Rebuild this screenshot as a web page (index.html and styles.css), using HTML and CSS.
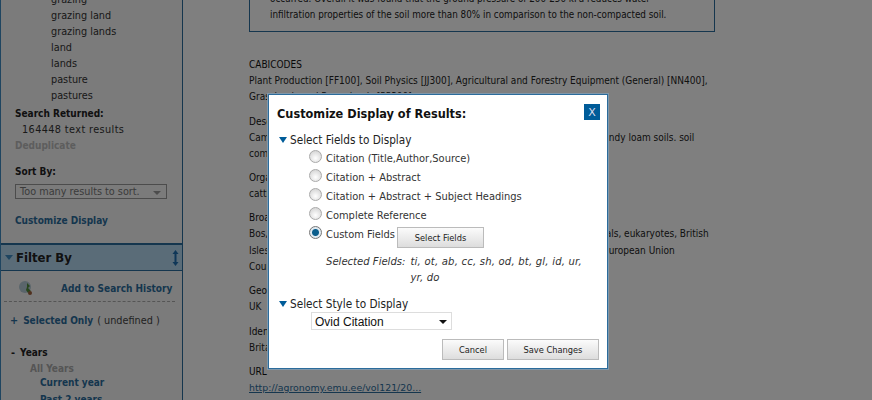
FILE: index.html
```html
<!DOCTYPE html>
<html lang="en">
<head>
<meta charset="utf-8">
<title>Customize Display of Results</title>
<link rel="stylesheet" href="styles.css">
</head>
<body>
<div class="page">
  <aside class="sidebar">
    <div class="search-panel">
      <ul class="terms">
        <li>grazing</li><li>grazing land</li><li>grazing lands</li><li>land</li><li>lands</li><li>pasture</li><li>pastures</li>
      </ul>
      <div class="side-head first">Search Returned:</div>
      <div class="results">164448 text results</div>
      <div class="dedupe">Deduplicate</div>
      <div class="side-head sort">Sort By:</div>
      <div class="fake-select"><span>Too many results to sort.</span><i class="fake-arrow"></i></div>
      <a class="customize">Customize Display</a>
    </div>
    <div class="filter-head">
      <span class="tri"></span><span class="filter-title">Filter By</span>
      <svg class="resize" width="7" height="16" viewBox="0 0 7 16"><path d="M3.5 0 L6.5 4 H4.5 V12 H6.5 L3.5 16 L.5 12 H2.5 V4 H.5 Z" fill="#1f6fb0"/></svg>
    </div>
    <div class="history">
      <svg class="globe" width="16" height="16" viewBox="0 0 16 16"><circle cx="7" cy="7" r="6" fill="#b5cad6"/><path d="M9 3 L12 6 L10 8 L13 11 L10 13 L8 10 L9 7 Z" fill="#4f8a3a"/><circle cx="12" cy="13" r="2" fill="#a0603d"/></svg>
      <a class="history-link">Add to Search History</a>
    </div>
    <div class="selected"><span class="plus">+</span><a class="sel-link">Selected Only</a><span class="undef">( undefined )</span></div>
    <div class="years"><span class="minus">-</span><b>Years</b></div>
    <div class="all-years">All Years</div>
    <a class="year-link">Current year</a>
    <a class="year-link">Past 2 years</a>
  </aside>
  <main class="content">
    <div class="abstract">
      <p>occurred. Overall it was found that the ground pressure of 200-250 kPa reduces water</p>
      <p>infiltration properties of the soil more than 80% in comparison to the non-compacted soil.</p>
    </div>
    <section class="field cabi">
      <h4>CABICODES</h4>
      <p>Plant Production [FF100], Soil Physics [JJ300], Agricultural and Forestry Equipment (General) [NN400],</p>
      <p>Grasslands and Rangelands [PP300]</p>
    </section>
    <section class="field">
      <h4>Descriptors</h4>
      <p>Cambisols, cattle, compaction, grasslands, grazing, infiltration, pastures, UK, sandy loam soils. soil</p>
      <p>compaction, soil physical properties</p>
    </section>
    <section class="field">
      <h4>Organisms</h4>
      <p>cattle</p>
    </section>
    <section class="field">
      <h4>Broader Terms</h4>
      <p>Bos, Bovidae, ruminants, Artiodactyla, ungulates, mammals, vertebrates, animals, eukaryotes, British</p>
      <p>Isles, UK, Western Europe, Europe, Developed Countries, OECD Countries, EU, European Union</p>
      <p>Countries</p>
    </section>
    <section class="field">
      <h4>Geographic</h4>
      <p>UK</p>
    </section>
    <section class="field">
      <h4>Identifiers</h4>
      <p>Britain</p>
    </section>
    <section class="field">
      <h4>URL</h4>
      <p><a class="url">http://agronomy.emu.ee/vol121/20...</a></p>
    </section>
  </main>
</div>
<div class="overlay"></div>
<div class="modal">
  <div class="modal-top">
    <h2>Customize Display of Results:</h2>
    <button class="close" type="button">X</button>
  </div>
  <div class="group-head"><span class="down"></span>Select Fields to Display</div>
  <div class="options">
    <label class="opt"><span class="radio"></span>Citation (Title,Author,Source)</label>
    <label class="opt"><span class="radio"></span>Citation + Abstract</label>
    <label class="opt"><span class="radio"></span>Citation + Abstract + Subject Headings</label>
    <label class="opt"><span class="radio"></span>Complete Reference</label>
    <label class="opt custom"><span class="radio on"></span>Custom Fields<button class="btn select-fields" type="button">Select Fields</button></label>
  </div>
  <div class="selected-fields">
    <span class="sf-label">Selected Fields:</span>
    <span class="sf-values">ti, ot, ab, cc, sh, od, bt, gl, id, ur, yr, do</span>
  </div>
  <div class="group-head style-head"><span class="down"></span>Select Style to Display</div>
  <div class="style-select"><span>Ovid Citation</span><i class="style-arrow"></i></div>
  <div class="actions">
    <button class="btn cancel" type="button">Cancel</button>
    <button class="btn save" type="button">Save Changes</button>
  </div>
</div>
</body>
</html>
```
FILE: styles.css
```css
html, body { margin: 0; padding: 0; }
body {
  width: 872px; height: 400px; overflow: hidden; background: #fff; position: relative;
  font-family: "DejaVu Sans Condensed", "DejaVu Sans", Verdana, sans-serif; font-stretch: condensed; font-size: 10px; color: #222;
}
a { display: block; }
p, h2, h4, ul { margin: 0; padding: 0; }
.page { display: flex; align-items: flex-start; height: 400px; overflow: hidden; }
.sidebar {
  width: 181px; height: 400px; flex: none; overflow: hidden; background: #f6f6f6;
  border-left: 1px solid #3f8ac0; border-right: 1px solid #2b6c9c;
  font-family: "DejaVu Sans", Verdana, sans-serif; font-stretch: normal; font-size: 9.7px;
}
.search-panel { padding: 0 0 0 14px; height: 243px; box-sizing: border-box; display: flow-root; }
.terms { list-style: none; margin-top: -8px; padding-left: 36px; color: #333; }
.terms li { height: 16px; line-height: 16px; }
.side-head, .dedupe, .customize, .history-link, .sel-link, .all-years, .year-link, .years b {
  font-family: "DejaVu Sans Condensed", "DejaVu Sans", sans-serif; font-stretch: condensed; font-weight: bold; font-size: 10px;
}
.side-head { line-height: 16px; color: #222; }
.side-head.first { margin-top: 2px; }
.results { padding-left: 7px; line-height: 16px; color: #333; letter-spacing: .4px; }
.dedupe { line-height: 16px; color: #bbb; }
.side-head.sort { margin-top: 10px; }
.fake-select {
  margin-top: 4px; height: 13px; border: 1px solid #999; display: flex; align-items: center;
  justify-content: space-between; padding: 0 5px 0 4px; width: 141px; color: #777;
}
.fake-arrow { width: 0; height: 0; border: 4px solid transparent; border-top-color: #999; border-bottom: 0; margin-top: 3px; }
.customize { margin-top: 14px; color: #2b6c9c; line-height: 16px; }
.filter-head {
  height: 25px; border-top: 2px solid #2b6c9c; border-bottom: 1px solid #2b6c9c; background: #b4d8f0;
  display: flex; align-items: center; padding: 0 3px 0 4px;
}
.tri { width: 0; height: 0; border: 4px solid transparent; border-top: 5px solid #3f8ac0; border-bottom: 0; margin-right: 3px; }
.filter-title {
  font-family: "DejaVu Sans Condensed", "DejaVu Sans", sans-serif; font-stretch: condensed;
  font-size: 13px; font-weight: bold; color: #222; flex: 1;
}
.history { display: flex; align-items: center; height: 26px; padding: 4px 0 0 14px; margin: 0 7px 0 3px; border-bottom: 1px dashed #aaa; }
.history-link { color: #2b6c9c; margin-left: 27px; white-space: nowrap; }
.selected { margin-top: 11px; padding-left: 9px; line-height: 16px; display: flex; color: #444; }
.plus { color: #2b6c9c; margin-right: 5px; font-weight: bold; }
.sel-link { color: #2b6c9c; margin-right: 4px; }
.years { margin-top: 16px; padding-left: 10px; line-height: 16px; }
.minus { margin-right: 5px; font-weight: bold; }
.all-years { padding-left: 29px; line-height: 15px; color: #aaa; }
.year-link { padding-left: 39px; line-height: 14px; margin-bottom: 3px; color: #2b6c9c; }
.content { flex: 1; padding-left: 66px; min-width: 0; white-space: nowrap; }
.abstract { width: 424px; margin-top: -9px; height: 40px; padding: 0 20px; border: 1px solid #2b6c9c; border-top: 0; line-height: 16px; font-size: 9.8px; }
.field { margin-top: 8px; line-height: 16.3px; }
.field h4 { font-weight: normal; line-height: 16px; color: #111; }
.field.cabi { margin-top: 25px; }
.url { color: #2b6c9c; text-decoration: underline; font-family: "DejaVu Sans", sans-serif; font-stretch: normal; font-size: 9.4px; }
.overlay { position: absolute; inset: 0; background: rgba(0,0,0,.5); }
.modal {
  position: absolute; left: 268px; top: 94px; width: 338px; height: 273px; background: #fff;
  border: 1px solid #2b6c9c; box-shadow: 0 0 0 1px #7f97aa;
  font-size: 11px; color: #222;
}
.modal-top { display: flex; justify-content: space-between; padding: 9px 7px 0 8px; align-items: flex-start; height: 25px; }
.modal-top h2 { font-size: 12.6px; font-weight: bold; line-height: 20px; color: #111; }
.close { width: 16px; height: 16px; padding: 0; background: #005c99; color: #dde; border: 0; font: 11px "DejaVu Sans", sans-serif; }
.group-head { display: flex; align-items: center; padding-left: 10px; font-size: 11.7px; line-height: 16px; margin-top: 3px; }
.down { width: 0; height: 0; border: 4px solid transparent; border-top: 6px solid #005c99; border-bottom: 0; margin-right: 3px; }
.options { padding-left: 40px; margin-top: 1px; }
.opt { display: flex; align-items: center; height: 19px; color: #333; }
.opt.custom { height: 18px; }
.radio {
  width: 11px; height: 11px; margin-right: 4px; border-radius: 50%; flex: none; margin-top: -4px;
  border: 1px solid #aaa; background: radial-gradient(circle at 50% 65%, #fff, #ccc);
}
.radio.on { background: radial-gradient(circle, #0a5d8c 0 3px, #dfe9f0 4px); border-color: #777; }
.btn {
  border: 1px solid #bbb; background: linear-gradient(#fbfbfb, #ddd); font: 9.2px "DejaVu Sans Condensed", "DejaVu Sans", sans-serif; font-stretch: condensed; color: #222; padding: 0;
}
.select-fields { width: 87px; height: 21px; margin-left: 2px; margin-top: 7px; }
.selected-fields { display: flex; padding: 11px 0 0 57px; line-height: 16px; font-style: italic; color: #333; font-size: 11.2px; }
.sf-label { margin-right: 5px; white-space: nowrap; }
.sf-values { width: 178px; letter-spacing: .2px; }
.group-head.style-head { margin-top: 10px; }
.style-select {
  margin: 0 0 0 42px; width: 134px; height: 15px; border: 1px solid #ddd; display: flex; align-items: center;
  justify-content: space-between; padding: 1px 2px 0 3px; font: 12px "Liberation Sans", Arial, sans-serif; color: #111;
}
.style-arrow { width: 0; height: 0; border: 4px solid transparent; border-top: 4px solid #111; border-bottom: 0; margin-right: 2px; }
.actions { display: flex; justify-content: flex-end; gap: 3px; padding: 9px 8px 0 0; }
.cancel { width: 62px; height: 21px; }
.save { width: 92px; height: 21px; }
```
